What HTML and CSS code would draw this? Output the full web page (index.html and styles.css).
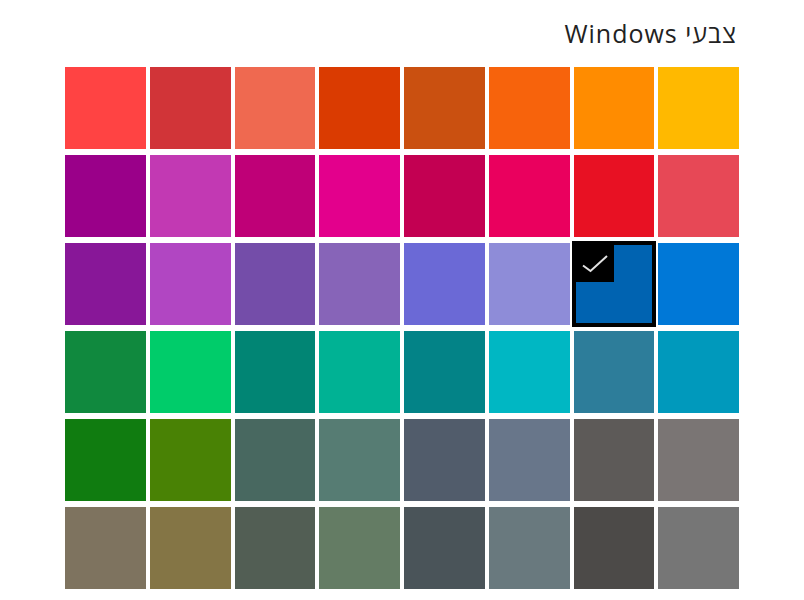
FILE: index.html
```html
<!DOCTYPE html>
<html lang="he" dir="rtl">
<head>
    <meta charset="UTF-8">
    <title>צבעי Windows</title>
    <link rel="stylesheet" href="styles.css">
</head>
<body>
    <main class="panel">
        <h2 class="title">צבעי Windows</h2>
        <div class="swatches">
            <div class="swatch c-ffb900"></div>
            <div class="swatch c-ff8c00"></div>
            <div class="swatch c-f7630c"></div>
            <div class="swatch c-ca5010"></div>
            <div class="swatch c-da3b01"></div>
            <div class="swatch c-ef6950"></div>
            <div class="swatch c-d13438"></div>
            <div class="swatch c-ff4343"></div>

            <div class="swatch c-e74856"></div>
            <div class="swatch c-e81123"></div>
            <div class="swatch c-ea005e"></div>
            <div class="swatch c-c30052"></div>
            <div class="swatch c-e3008c"></div>
            <div class="swatch c-bf0077"></div>
            <div class="swatch c-c239b3"></div>
            <div class="swatch c-9a0089"></div>

            <div class="swatch c-0078d7"></div>
            <div class="swatch c-0063b1 selected">
                <span class="check">
                    <svg width="40" height="39" viewBox="0 0 40 39">
                        <path d="M9 22.5 L16.5 28 L33 13" fill="none" stroke="#e2e2e2" stroke-width="2"/>
                    </svg>
                </span>
            </div>
            <div class="swatch c-8e8cd8"></div>
            <div class="swatch c-6b69d6"></div>
            <div class="swatch c-8764b8"></div>
            <div class="swatch c-744da9"></div>
            <div class="swatch c-b146c2"></div>
            <div class="swatch c-881798"></div>

            <div class="swatch c-0099bc"></div>
            <div class="swatch c-2d7d9a"></div>
            <div class="swatch c-00b7c3"></div>
            <div class="swatch c-038387"></div>
            <div class="swatch c-00b294"></div>
            <div class="swatch c-018574"></div>
            <div class="swatch c-00cc6a"></div>
            <div class="swatch c-10893e"></div>

            <div class="swatch c-7a7574"></div>
            <div class="swatch c-5d5a58"></div>
            <div class="swatch c-68768a"></div>
            <div class="swatch c-515c6b"></div>
            <div class="swatch c-567c73"></div>
            <div class="swatch c-486860"></div>
            <div class="swatch c-498205"></div>
            <div class="swatch c-107c10"></div>

            <div class="swatch c-767676"></div>
            <div class="swatch c-4c4a48"></div>
            <div class="swatch c-69797e"></div>
            <div class="swatch c-4a5459"></div>
            <div class="swatch c-647c64"></div>
            <div class="swatch c-525e54"></div>
            <div class="swatch c-847545"></div>
            <div class="swatch c-7e735f"></div>
        </div>
    </main>
</body>
</html>
```

FILE: styles.css
```css
body {
    font-family: "Open Sans", "Liberation Sans", "DejaVu Sans", sans-serif;
    background-color: #fff;
    margin: 0;
    padding: 0;
}

.panel {
    width: 674px;
    margin: 0 auto;
    padding-top: 18px;
}

.title {
    margin: 0 2px 19px 0;
    font-size: 25px;
    line-height: 30px;
    letter-spacing: 1px;
    font-weight: normal;
    color: #222;
}

.swatches {
    display: grid;
    grid-template-columns: repeat(8, 1fr);
    grid-auto-rows: 82px;
    column-gap: 4px;
    row-gap: 6px;
}

.swatch {
    position: relative;
}

.swatch.selected {
    box-shadow: 0 0 0 2px #000, inset 0 0 0 2px #000;
}

.check {
    position: absolute;
    left: 0;
    top: 0;
    width: 40px;
    height: 39px;
    background: #000;
}

.check svg {
    display: block;
}

.c-ffb900 { background: #ffb900; }
.c-ff8c00 { background: #ff8c00; }
.c-f7630c { background: #f7630c; }
.c-ca5010 { background: #ca5010; }
.c-da3b01 { background: #da3b01; }
.c-ef6950 { background: #ef6950; }
.c-d13438 { background: #d13438; }
.c-ff4343 { background: #ff4343; }

.c-e74856 { background: #e74856; }
.c-e81123 { background: #e81123; }
.c-ea005e { background: #ea005e; }
.c-c30052 { background: #c30052; }
.c-e3008c { background: #e3008c; }
.c-bf0077 { background: #bf0077; }
.c-c239b3 { background: #c239b3; }
.c-9a0089 { background: #9a0089; }

.c-0078d7 { background: #0078d7; }
.c-0063b1 { background: #0063b1; }
.c-8e8cd8 { background: #8e8cd8; }
.c-6b69d6 { background: #6b69d6; }
.c-8764b8 { background: #8764b8; }
.c-744da9 { background: #744da9; }
.c-b146c2 { background: #b146c2; }
.c-881798 { background: #881798; }

.c-0099bc { background: #0099bc; }
.c-2d7d9a { background: #2d7d9a; }
.c-00b7c3 { background: #00b7c3; }
.c-038387 { background: #038387; }
.c-00b294 { background: #00b294; }
.c-018574 { background: #018574; }
.c-00cc6a { background: #00cc6a; }
.c-10893e { background: #10893e; }

.c-7a7574 { background: #7a7574; }
.c-5d5a58 { background: #5d5a58; }
.c-68768a { background: #68768a; }
.c-515c6b { background: #515c6b; }
.c-567c73 { background: #567c73; }
.c-486860 { background: #486860; }
.c-498205 { background: #498205; }
.c-107c10 { background: #107c10; }

.c-767676 { background: #767676; }
.c-4c4a48 { background: #4c4a48; }
.c-69797e { background: #69797e; }
.c-4a5459 { background: #4a5459; }
.c-647c64 { background: #647c64; }
.c-525e54 { background: #525e54; }
.c-847545 { background: #847545; }
.c-7e735f { background: #7e735f; }
```
